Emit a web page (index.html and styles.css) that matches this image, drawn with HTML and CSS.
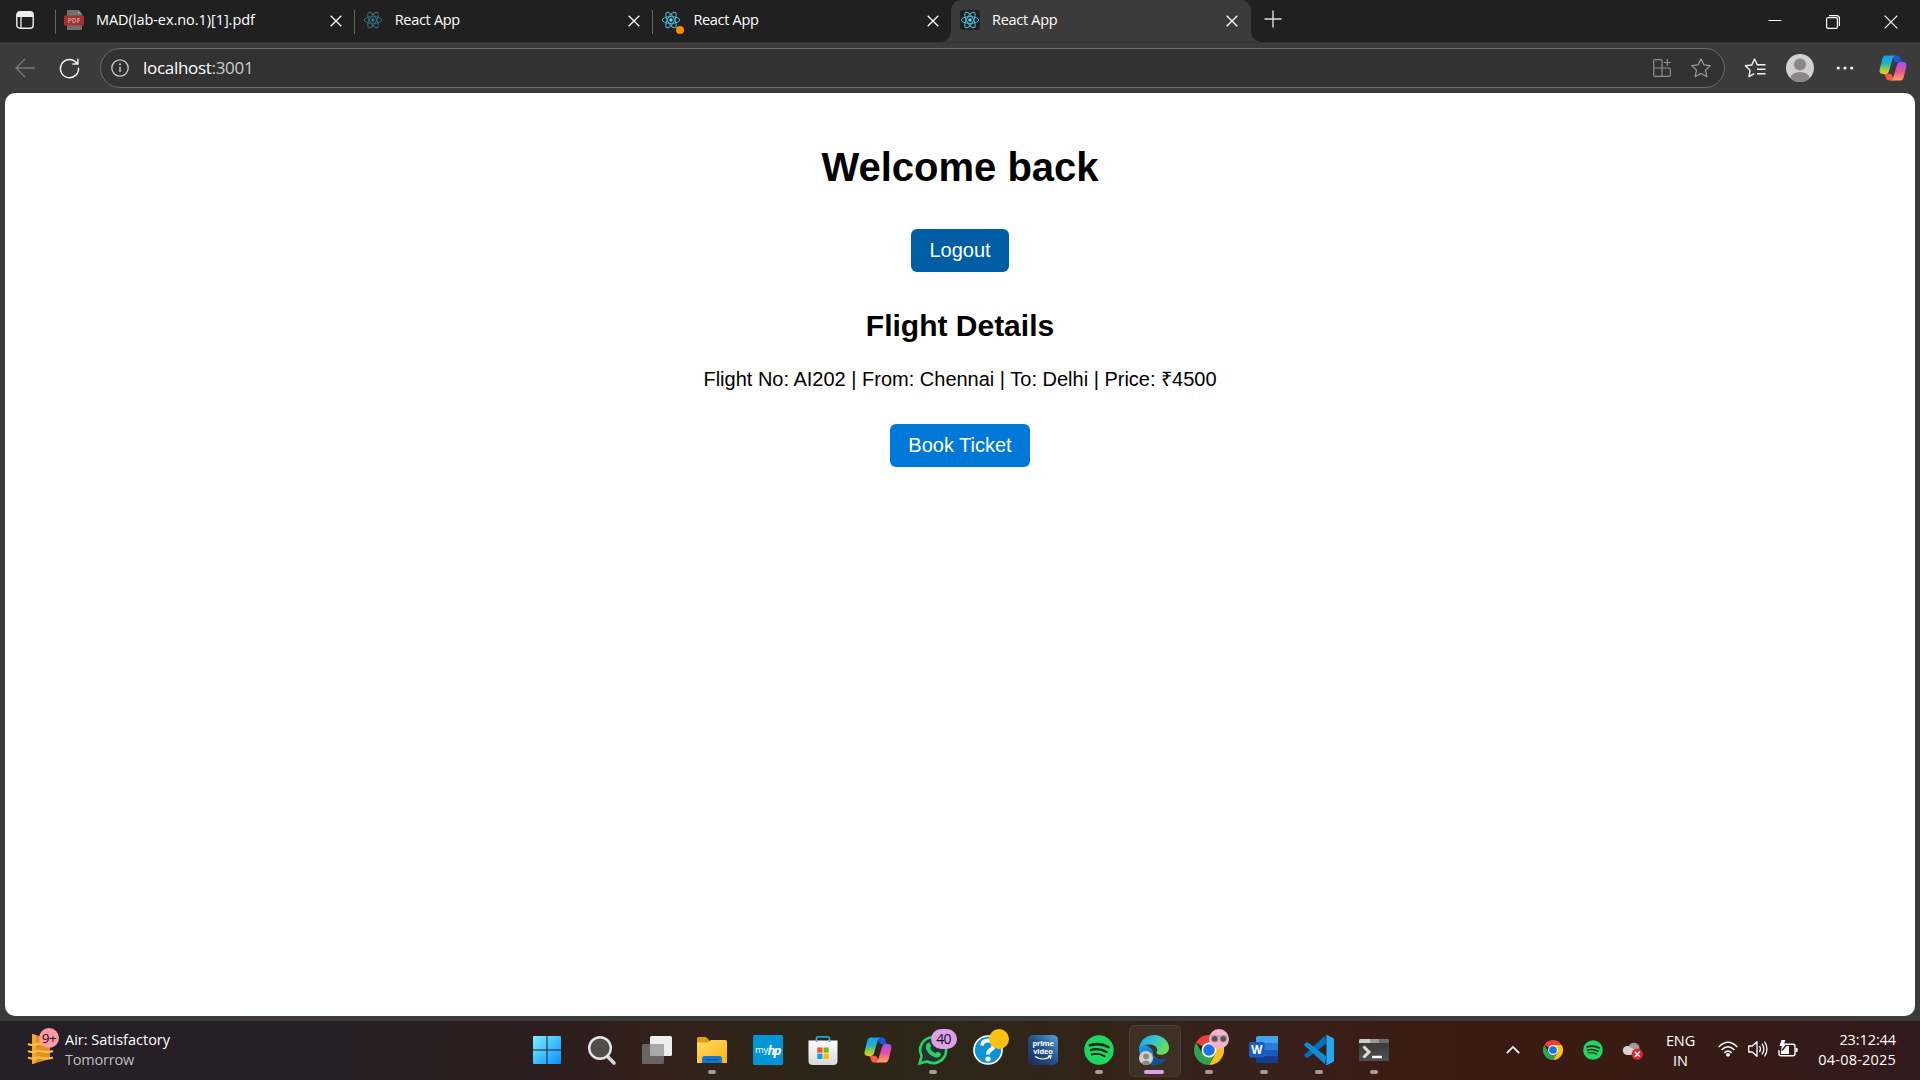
FILE: index.html
```html
<!DOCTYPE html>
<html lang="en">
<head>
<meta charset="utf-8">
<title>React App</title>
<link rel="stylesheet" href="styles.css">
</head>
<body>
<svg class="defs" width="0" height="0" aria-hidden="true">
  <defs>
    <linearGradient id="cpA" x1="0" y1="0" x2="0" y2="1"><stop offset="0" stop-color="#1a9df0"/><stop offset=".45" stop-color="#22b3c4"/><stop offset=".75" stop-color="#9ccb3c"/><stop offset="1" stop-color="#f8c818"/></linearGradient>
    <linearGradient id="cpB" x1="0" y1="0" x2="0" y2="1"><stop offset="0" stop-color="#a252ee"/><stop offset=".5" stop-color="#ee4f9a"/><stop offset="1" stop-color="#fda85a"/></linearGradient>
    <linearGradient id="win" x1="0" y1="0" x2="1" y2="1"><stop offset="0" stop-color="#7cf0ff"/><stop offset="1" stop-color="#0a8fff"/></linearGradient>
    <linearGradient id="fold" x1="0" y1="0" x2="1" y2="1"><stop offset="0" stop-color="#ffdc6a"/><stop offset="1" stop-color="#fbb40f"/></linearGradient>
    <linearGradient id="store" x1="0" y1="0" x2="0" y2="1"><stop offset="0" stop-color="#ffffff"/><stop offset="1" stop-color="#d9d9dc"/></linearGradient>
    <linearGradient id="prime" x1="0" y1="1" x2="1" y2="0"><stop offset="0" stop-color="#1d2a58"/><stop offset=".5" stop-color="#234f8d"/><stop offset="1" stop-color="#50a5dc"/></linearGradient>
    <linearGradient id="edgeTop" x1="0" y1="0" x2="1" y2=".5"><stop offset="0" stop-color="#229fe0"/><stop offset=".5" stop-color="#35c3d5"/><stop offset="1" stop-color="#69e052"/></linearGradient>
    <linearGradient id="edgeBase" x1="0" y1="0" x2="1" y2="1"><stop offset="0" stop-color="#1f9cec"/><stop offset="1" stop-color="#0b5ea8"/></linearGradient>
    <linearGradient id="term" x1="0" y1="0" x2="0" y2="1"><stop offset="0" stop-color="#363636"/><stop offset="1" stop-color="#505050"/></linearGradient>
    <symbol id="react" viewBox="0 0 20 20">
      <g fill="none" stroke="#4cb9d6" stroke-width="1"><ellipse cx="10" cy="10" rx="8.7" ry="3.4"/><ellipse cx="10" cy="10" rx="8.7" ry="3.4" transform="rotate(60 10 10)"/><ellipse cx="10" cy="10" rx="8.7" ry="3.4" transform="rotate(120 10 10)"/></g>
      <circle cx="10" cy="10" r="1.7" fill="#61dafb"/>
    </symbol>
    <symbol id="copilot" viewBox="0 0 28 26">
      <path d="M14 .5h4c2.300 0 3 1.500 3.600 3.300.4 1.500 1 3.500 3 3.500H19c-3 0-5-2-5-6.800z" fill="#1a58d8"/>
      <path d="M14 25.500h-4c-2 0-2.700-1.500-3.200-3.200C6.300 20.500 5.500 18.700 4 18.700h6c3 0 4.500 2.500 4 6.800z" fill="#f65b3c"/>
      <path d="M6.500.5h9.800c-1.500.4-2.200 1.800-2.800 3.700l-3.700 12.300c-.5 1.500-1.500 2.500-3.200 2.500H3.800C1 19 0 17.100.7 14.300L3.200 4.200C3.800 2 4.700.5 6.500.5z" fill="url(#cpA)"/>
      <path d="M21.500 25.500h-9.800c1.500-.4 2.200-1.800 2.800-3.700l3.700-12.300C18.700 8 19.700 7 21.400 7h2.800c2.800 0 3.800 1.900 3.100 4.700l-2.500 10.100c-.6 2.200-1.500 3.700-3.300 3.700z" fill="url(#cpB)"/>
    </symbol>
    <symbol id="chrome" viewBox="0 0 30 30">
      <path d="M15 15 2 7.500A15 15 0 0 1 28 7.500H15z" fill="#ea4335"/>
      <path d="M15 7.500h13A15 15 0 0 1 15 30l6.500-11.200z" fill="#fbc116"/>
      <path d="M2 7.500A15 15 0 0 0 15 30l6.500-11.200L15 15l-6.500 3.800z" fill="#30a350"/>
      <circle cx="15" cy="15" r="7.400" fill="#fff"/><circle cx="15" cy="15" r="5.800" fill="#1a73e8"/>
    </symbol>
    <symbol id="spotify" viewBox="0 0 30 30">
      <circle cx="15" cy="15" r="14.700" fill="#1ed760"/>
      <g fill="none" stroke="#14261a" stroke-linecap="round"><path d="M6 10.300c6-1.700 13-1.200 18.500 1.800" stroke-width="2.700"/><path d="M6.800 15c5.300-1.500 11-.8 15.700 1.900" stroke-width="2.300"/><path d="M7.600 19.500c4.500-1.200 9-.7 13 1.700" stroke-width="1.900"/></g>
    </symbol>
    <symbol id="x" viewBox="0 0 14 14"><path d="M1.700 1.700 12.300 12.300M12.300 1.700 1.700 12.300" fill="none" stroke="#fff" stroke-width="1.300"/></symbol>
  </defs>
</svg>

<div class="screen">
  <header class="tabstrip">
    <div class="workspace">
      <svg width="18" height="18" viewBox="0 0 18 18"><rect x=".8" y=".8" width="16.400" height="16.400" rx="3" fill="none" stroke="#eee" stroke-width="1.400"/><path d="M1 3.500Q1 1 3.500 1h11Q17 1 17 3.500V6H1z" fill="#eee"/><path d="M5 6v11" stroke="#eee" stroke-width="1.300"/></svg>
    </div>
    <div class="tab">
      <svg class="favicon" viewBox="0 0 20 20"><path d="M3 0h11l4 4v16H3z" fill="#6f6f6f"/><path d="M14 0l4 4h-4z" fill="#999"/><rect x="0" y="5.500" width="20" height="10" rx="1" fill="#a3302f"/><text class="pdf-label" x="10" y="13.300" text-anchor="middle">PDF</text></svg>
      <span class="tab-title first-title">MAD(lab-ex.no.1)[1].pdf</span>
      <svg class="tab-close"><use href="#x"/></svg>
    </div>
    <div class="tab">
      <svg class="favicon dim"><use href="#react"/></svg>
      <span class="tab-title">React App</span>
      <svg class="tab-close"><use href="#x"/></svg>
    </div>
    <div class="tab">
      <span class="fav-wrap"><svg class="favicon"><use href="#react"/></svg><i class="dot"></i></span>
      <span class="tab-title">React App</span>
      <svg class="tab-close"><use href="#x"/></svg>
    </div>
    <div class="tab active">
      <svg class="favicon tile"><use href="#react"/></svg>
      <span class="tab-title">React App</span>
      <svg class="tab-close"><use href="#x"/></svg>
    </div>
    <svg class="newtab" viewBox="0 0 18 18"><path d="M9 .5v17M.5 9h17" stroke="#ddd" stroke-width="1.400"/></svg>
    <div class="win-controls">
      <svg viewBox="0 0 14 14"><path d="M.5 5.500h13" stroke="#fff" stroke-width="1"/></svg>
      <svg viewBox="0 0 14 14"><rect x=".6" y="2.600" width="10.800" height="10.800" rx="1.500" fill="none" stroke="#fff" stroke-width="1.200"/><path d="M3 .6h7.500Q13.400.6 13.400 3.500V11" fill="none" stroke="#fff" stroke-width="1.200"/></svg>
      <svg viewBox="0 0 14 14"><path d="M.7.7l12.600 12.600M13.300.7.7 13.300" stroke="#fff" stroke-width="1.200"/></svg>
    </div>
  </header>

  <div class="toolbar">
    <svg class="back" viewBox="0 0 20 20"><path d="M10 1 1 10l9 9M1 10h19" fill="none" stroke="#777" stroke-width="1.300"/></svg>
    <svg class="reload" viewBox="0 0 22 22"><path d="M20.400 10A9.500 9.500 0 1 1 17 3.800L19.300 6M19.800.8V6.300H14" fill="none" stroke="#f2f2f2" stroke-width="1.500"/></svg>
    <div class="address">
      <svg width="18" height="18" viewBox="0 0 18 18"><circle cx="9" cy="9" r="8.200" fill="none" stroke="#ccc" stroke-width="1.300"/><path d="M9 8v5" stroke="#ccc" stroke-width="1.500"/><circle cx="9" cy="5.300" r="1" fill="#ccc"/></svg>
      <span class="url">localhost<span class="port">:3001</span></span>
      <svg class="apps" width="18" height="18" viewBox="0 0 18 18"><path d="M9 9H.7V2Q.7.7 2 .7h5.700Q9 .7 9 2v15.300M.7 9v7Q.7 17.300 2 17.300h14q1.300 0 1.300-1.300v-5.700Q17.300 9 16 9H9M14.300 0v7M10.800 3.500h7" fill="none" stroke="#8e8e8e" stroke-width="1.200"/></svg>
      <svg width="22" height="22" viewBox="0 0 22 22"><path d="M11 1.800l2.800 6 6.500.8-4.800 4.500 1.300 6.600L11 16.500l-5.800 3.200 1.300-6.600L1.700 8.600l6.500-.8z" fill="none" stroke="#999" stroke-width="1.300" stroke-linejoin="round"/></svg>
    </div>
    <div class="tools">
      <svg width="22" height="22" viewBox="0 0 22 22"><path d="M13.500 8.300 10.500 2 7.800 8l-6.300.8L6 13.300 5 19.700l5.200-3M13 7.800h8.500M13 12.300h8.500M13 16.800h8.500" fill="none" stroke="#f2f2f2" stroke-width="1.400" stroke-linejoin="round"/></svg>
      <svg class="avatar" width="28" height="28" viewBox="0 0 28 28"><defs><clipPath id="av"><circle cx="14" cy="14" r="14"/></clipPath></defs><circle cx="14" cy="14" r="14" fill="#d2d0ce"/><g clip-path="url(#av)" fill="#8a8886"><circle cx="14" cy="10.500" r="6"/><ellipse cx="14" cy="25" rx="10" ry="7"/></g></svg>
      <svg class="more" width="18" height="6" viewBox="0 0 18 6"><g fill="#f2f2f2"><circle cx="2.300" cy="3" r="1.600"/><circle cx="9" cy="3" r="1.600"/><circle cx="15.700" cy="3" r="1.600"/></g></svg>
      <svg class="copilot-btn" width="28" height="26"><use href="#copilot"/></svg>
    </div>
  </div>

  <main class="page">
    <h1>Welcome back</h1>
    <button class="btn logout">Logout</button>
    <h2>Flight Details</h2>
    <p>Flight No: AI202 | From: Chennai | To: Delhi | Price: ₹4500</p>
    <button class="btn book">Book Ticket</button>
  </main>

  <footer class="taskbar">
    <div class="weather">
      <div class="weather-icon">
        <svg width="26" height="32" viewBox="0 0 26 32"><path d="M4 1l18 5v20L4 31z" fill="#e0901c"/><path d="M4 1l4 1v28l-4 1z" fill="#f5a82c"/><path d="M0 11c6 3 7-1 12 0s8 2 13 0M0 18c6 3 7-1 12 0s8 2 13 0M0 24.500c6 3 7-1 12 0s8 2 13 0" fill="none" stroke="#f7c24c" stroke-width="2.200"/></svg>
        <span class="weather-badge">9+</span>
      </div>
      <div class="weather-text"><span class="air">Air: Satisfactory</span><span class="tomorrow">Tomorrow</span></div>
    </div>

    <div class="apps-row">
      <div class="app"><svg viewBox="0 0 30 30"><path d="M2 1h12.500v13.500H1V2q0-1 1-1zM15.500 1H28q1 0 1 1v12.500H15.500zM1 15.500h13.500V29H2q-1 0-1-1zM15.500 15.500H29V28q0 1-1 1H15.500z" fill="url(#win)"/></svg></div>
      <div class="app"><svg viewBox="0 0 30 30"><path d="M20 21l7 7" stroke="#d6d8dc" stroke-width="3.600" stroke-linecap="round"/><circle cx="13" cy="13" r="10.800" fill="#544c4c" stroke="#e4e6e8" stroke-width="2.400"/></svg></div>
      <div class="app"><svg viewBox="0 0 30 30"><rect x="8" y="1" width="22" height="20" rx="1.500" fill="#eee"/><rect x="0" y="9" width="22" height="20" rx="1.500" fill="#686664"/><path d="M8 9h14v12H9.500Q8 21 8 19.500z" fill="#aaa9a8"/></svg></div>
      <div class="app running"><svg viewBox="0 0 30 30"><path d="M0 3.500Q0 2 1.500 2H9l4 4h11v7H0z" fill="#e0a008"/><path d="M0 7.500h11L14 5h14.500Q30 5 30 6.500V28H0z" fill="url(#fold)"/><path d="M5 28v-4.500Q5 21 7.500 21h15q2.500 0 2.500 2.500V28z" fill="#0f78d4"/><path d="M8.500 24.600h13" stroke="#0a4e96" stroke-width="1.200"/></svg></div>
      <div class="app"><svg viewBox="0 0 30 30"><rect width="30" height="30" rx="1.500" fill="#0096d6"/><text class="hp-my" x="2" y="18">my</text><text class="hp-hp" x="14.500" y="20">hp</text></svg></div>
      <div class="app"><svg viewBox="0 0 30 30"><path d="M8.500 8V3.500q0-1.700 1.700-1.700h9.600q1.700 0 1.700 1.700V8" fill="none" stroke="#1ba7e0" stroke-width="1.700"/><path d="M.5 5.500H29.500V26q0 4-4 4H4.500q-4 0-4-4z" fill="url(#store)"/><path d="M8.500 5.500v1.500M21.500 5.500v1.500" stroke="#1ba7e0" stroke-width="1.700"/><path d="M9.300 12.500h5.200v5.200H9.300z" fill="#f25022"/><path d="M15.500 12.500h5.200v5.200h-5.200z" fill="#7fba00"/><path d="M9.300 18.700h5.200v5.200H9.300z" fill="#00a4ef"/><path d="M15.500 18.700h5.200v5.200h-5.200z" fill="#ffb900"/></svg></div>
      <div class="app"><svg class="cop"><use href="#copilot"/></svg></div>
      <div class="app running"><svg viewBox="0 0 30 30"><path d="M1.500 28.500 3.600 21A13 13 0 1 1 9 26.500z" fill="#25332a" stroke="#25d366" stroke-width="2.600"/><path d="M9.500 8.200c1-1 2.200-.7 2.700.5l.9 2.200c.3.900-1.300 1.900-1 2.500 1.200 2.200 2.800 3.700 5.100 4.700.7.300 1.500-1.800 2.400-1.400l2.700 1.300c1 .5.400 2.700-.6 3.500-2 1.600-4.500 1-7-.3-3-1.600-5.200-3.900-6.500-7-.9-2.200-.5-4.500 1.300-6z" fill="#25d366"/></svg><span class="count">40</span></div>
      <div class="app"><svg viewBox="0 0 30 30"><circle cx="15" cy="15" r="14" fill="#0a94d4" stroke="#fff" stroke-width="1.700"/><path d="M9 10.500Q9.500 5.500 15 5.500t5.500 5q0 3-3 4.500Q15 16.500 15 19.500" fill="none" stroke="#fff" stroke-width="3.800"/><circle cx="15" cy="24" r="2.600" fill="#fff"/></svg><span class="alert"></span></div>
      <div class="app"><svg viewBox="0 0 30 30"><rect width="30" height="30" rx="5" fill="url(#prime)"/><text class="prime-text" x="15" y="11" text-anchor="middle">prime</text><text class="prime-text" x="15" y="19" text-anchor="middle">video</text><path d="M7 21.500q8 5 15.500 0M20 21.200l3-.4-.6 3" fill="none" stroke="#fff" stroke-width="1.200"/></svg></div>
      <div class="app running"><svg><use href="#spotify"/></svg></div>
      <div class="app current"><svg viewBox="0 0 30 30"><path d="M.3 12C-1 22 6 30 16 30c5 0 9-2.500 11.500-6.500-7 3-13 0-13.500-5.500 0-2-1-4-3-5.500C7 9 2 9 .3 12z" fill="url(#edgeBase)"/><path d="M11 15.500c-.5 7 8 11.500 16.500 8C25 27.500 21 30 16 30c-7-1-9.500-9-5-14.500z" fill="#114f91"/><path d="M.3 13C1.200 5.500 7 0 15 0s15 6 15 12.500c0 5-4 7.300-8 7.300-3.500 0-5.300-1.300-4.200-2.800 1.700-3-.8-7.200-6.300-7.500C6.500 9 2.500 10 .3 13z" fill="url(#edgeTop)"/></svg>
        <svg class="profile" viewBox="0 0 14 14"><circle cx="7" cy="7" r="7" fill="#d2d0ce"/><circle cx="7" cy="5.300" r="2.900" fill="#8a8886"/><path d="M2.300 12q4.700-5 9.400 0-4.700 4-9.400 0z" fill="#8a8886"/></svg></div>
      <div class="app running"><svg><use href="#chrome"/></svg><svg class="glasses" viewBox="0 0 20 20"><circle cx="10" cy="10" r="10" fill="#f3b3cb"/><path d="M1.500 7h17" stroke="#b5a3ad" stroke-width="1.500"/><rect x="2.500" y="6.800" width="6.500" height="6.200" rx="3" fill="#575055" stroke="#a8989f" stroke-width=".8"/><rect x="11" y="6.800" width="6.500" height="6.200" rx="3" fill="#575055" stroke="#a8989f" stroke-width=".8"/></svg></div>
      <div class="app running"><svg viewBox="0 0 30 30"><path d="M7 2.500Q7 1 8.500 1H29v7H7z" fill="#41a5ee"/><path d="M7 8h22v7H7z" fill="#2b7cd3"/><path d="M7 15h22v6.500H7z" fill="#185abd"/><path d="M7 21.500h22V28H8.500Q7 28 7 26.500z" fill="#103f91"/><rect x="0" y="7" width="15.500" height="15.500" rx="1.500" fill="#1c5cc0"/><text class="word-w" x="7.700" y="19" text-anchor="middle">W</text></svg></div>
      <div class="app running"><svg viewBox="0 0 30 30"><path d="M22.500 8.500 4 22.500l-1.500.2L.5 21q-.7-.8 0-1.500L21 .8z" fill="#0072b8"/><path d="M22.500 21.500 4 7.500l-1.500-.2L.5 9q-.7.8 0 1.500L21 29.200z" fill="#108bd8"/><path d="M21.500.2Q22.500-.2 23.500.3L29 3q1 .5 1 1.500v21q0 1-1 1.500l-5.500 2.700q-1 .5-2 .1.900-.2 1-1.500V1.700Q22.500.4 21.500.2z" fill="#27a7f2"/></svg></div>
      <div class="app running"><svg viewBox="0 0 30 30"><rect x="0" y="4" width="30" height="22" rx="1.500" fill="url(#term)"/><path d="M1.500 4H11v4H0V5.500Q0 4 1.500 4z" fill="#ccc"/><path d="M11 4h9v4h-9z" fill="#999"/><path d="M20 4h8.500Q30 4 30 5.500V8H20z" fill="#6b6b6b"/><path d="M4.500 11.500l5.500 5.500-5.500 5.500" fill="none" stroke="#ddd" stroke-width="3"/><path d="M13 22h10" stroke="#fff" stroke-width="2.500"/></svg></div>
    </div>

    <div class="tray">
      <svg class="chev" viewBox="0 0 14 8"><path d="M.8 7.200 7 1l6.200 6.200" fill="none" stroke="#fff" stroke-width="1.700"/></svg>
      <svg class="small"><use href="#chrome"/></svg>
      <svg class="small"><use href="#spotify"/></svg>
      <svg class="small" viewBox="0 0 20 20"><path d="M5 14.500a4.500 4.500 0 0 1-1-8.500h2a5.500 5.500 0 0 1 10.500 2.500v6z" fill="#a19a98"/><path d="M4.500 15A4.500 4.500 0 1 1 7 7l8 5v3z" fill="#d6d2d1"/><circle cx="14.300" cy="14.300" r="5.700" fill="#d9232e"/><path d="M11.800 11.800l5 5M16.800 11.800l-5 5" stroke="#fff" stroke-width="1.500"/></svg>
      <div class="lang"><span>ENG</span><span>IN</span></div>
      <div class="status">
        <svg width="20" height="16" viewBox="0 0 20 16"><path d="M.7 6Q10-3.500 19.300 6M3.600 9Q10 2.500 16.400 9M6.400 12Q10 8.200 13.600 12" fill="none" stroke="#fff" stroke-width="1.500"/><circle cx="10" cy="13.800" r="1.900" fill="#fff"/></svg>
        <svg width="20" height="18" viewBox="0 0 20 18"><path d="M.7 6h3.600L9 1.700v14.600L4.300 12H.7z" fill="none" stroke="#fff" stroke-width="1.300" stroke-linejoin="round"/><path d="M11.500 6q2 3 0 6M14 3.700q3.700 5.300 0 10.600M16.500 1.500q5 7.500 0 15" fill="none" stroke="#fff" stroke-width="1.300"/></svg>
        <svg width="20" height="18" viewBox="0 0 20 18"><path d="M8 4.200h7q2 0 2 2v7.600q0 2-2 2H3q-2 0-2-2V10" fill="none" stroke="#fff" stroke-width="1.400"/><path d="M3 10.500h2L8.500 6H11v8H3zM3.500 0h4L6 3.500h2.700L3 10.500 3.800 6H1.500zM17.500 8h1.200q1 0 1 1v2q0 1-1 1h-1.200z" fill="#fff"/></svg>
      </div>
      <div class="clock"><span class="time">23:12:44</span><span class="date">04-08-2025</span></div>
    </div>
  </footer>
</div>
</body>
</html>
```
FILE: styles.css
```css
* { box-sizing: border-box; }
body { margin: 0; background: #3b3b3b; font-family: "Open Sans", "Noto Sans", sans-serif; }
svg { display: block; flex: none; overflow: visible; }
.defs { position: absolute; }
.screen { width: 1920px; height: 1080px; display: flex; flex-direction: column; overflow: hidden; background: #3b3b3b; }

/* Tab strip */
.tabstrip { height: 42px; flex: none; display: flex; align-items: flex-start; background: #202020; color: #fff; }
.workspace { width: 55px; padding: 11px 0 0 16px; }
.tab { width: 298.700px; height: 42px; padding: 10px 11px 0 9px; display: flex; align-items: flex-start; background: linear-gradient(#666, #666) 0 10px / 1px 24px no-repeat; }
.favicon { width: 20px; height: 20px; }
.dim { opacity: .5; }
.fav-wrap { position: relative; }
.dot { position: absolute; left: 15px; top: 16px; width: 8px; height: 8px; border-radius: 50%; background: #ff8c00; }
.tile { background: #202124; border-radius: 3px; }
.tab-title { flex: 1; margin-left: 12px; font-size: 14.500px; line-height: 20px; letter-spacing: -.3px; white-space: nowrap; }
.first-title { letter-spacing: -.05px; }
.tab-close { width: 14px; height: 14px; margin-top: 4px; }
.tab.active { position: relative; width: 300px; padding: 10px 12px 0 9px; background: #3b3b3b; border-radius: 10px 10px 0 0; }
.tab.active::before, .tab.active::after { content: ""; position: absolute; bottom: 0; width: 10px; height: 10px; }
.tab.active::before { left: -10px; background: radial-gradient(circle at 0 0, #202020 9.500px, #3b3b3b 10px); }
.tab.active::after { right: -10px; background: radial-gradient(circle at 100% 0, #202020 9.500px, #3b3b3b 10px); }
.newtab { width: 18px; height: 18px; margin: 10px 0 0 13px; }
.win-controls { margin: 15px 22px 0 auto; display: flex; gap: 44px; }
.win-controls svg { width: 14px; height: 14px; }

/* Toolbar */
.toolbar { height: 51px; flex: none; display: flex; align-items: center; padding: 0 13px 0 15px; border-top: 1px solid #333; }
.back { width: 20px; height: 20px; }
.reload { width: 21px; height: 21px; margin: 0 20px 0 24px; }
.address { width: 1625px; height: 40px; display: flex; align-items: center; padding: 0 12px 0 10px; border: 1px solid #6c6c6c; border-radius: 20px; background: #323232; }
.url { flex: 1; margin-left: 14px; font-size: 17px; line-height: 24px; letter-spacing: -.3px; color: #fff; }
.port { color: #ccc; }
.apps { margin-right: 19px; }
.tools { flex: 1; display: flex; align-items: center; padding-left: 19px; }
.avatar { margin-left: 20px; }
.more { margin-left: 22px; }
.copilot-btn { margin-left: auto; }

/* Page */
.page { height: 923px; flex: none; margin: 0 5px; padding: 51px 0 0; display: flex; flex-direction: column; align-items: center; border-radius: 10px; background: #fff; color: #000; font-family: "Liberation Sans", Arial, sans-serif; }
.page h1 { margin: 0; font-size: 40px; line-height: 46px; }
.page h2 { margin: 37px 0 0; font-size: 30px; line-height: 34px; }
.page p { margin: 25px 0 0; font-size: 20px; line-height: 23px; }
.btn { height: 43px; padding: 0; border: 0; border-radius: 6px; color: #fff; font: 20px/23px "Liberation Sans", Arial, sans-serif; }
.logout { width: 98px; margin-top: 39px; background: #005ea6; }
.book { width: 140px; margin-top: 33px; background: #0078d7; }

/* Taskbar */
.taskbar { height: 59px; flex: none; margin-top: 5px; display: flex; background: linear-gradient(90deg, #251f27 0, #271f25 300px, #2c1e1e 540px, #33211a 650px, #2d2618 800px, #2e2618 960px, #332319 1120px, #38201a 1280px, #3a1c15 1380px, #391b13 1600px, #321a1b 1920px); color: #fff; }
.weather { width: 519.500px; padding: 7px 0 0 28px; display: flex; }
.weather-icon { position: relative; padding-top: 5px; }
.weather-badge { position: absolute; left: 11px; top: 0; width: 20px; height: 20px; border-radius: 50%; background: #ff99a4; color: #111; font-size: 13.500px; line-height: 20px; text-align: center; letter-spacing: -.5px; }
.weather-text { margin: 2px 0 0 11px; display: flex; flex-direction: column; font-size: 14.500px; line-height: 20px; letter-spacing: -.2px; }
.air { letter-spacing: 0; }
.tomorrow { color: #c3bdc3; }
.apps-row { display: flex; }
.app { position: relative; width: 55.170px; height: 59px; padding: 14px 0 0 12.500px; }
.app > svg { width: 30px; height: 30px; }
.app > .cop { width: 28px; height: 26px; margin: 2px 0 0 1px; }
.running::after, .current::after { content: ""; position: absolute; left: 23.500px; top: 49px; width: 8px; height: 4px; border-radius: 2px; background: #a39c98; }
.current::after { left: 17.500px; width: 20px; background: #dc9fe8; }
.current::before { content: ""; position: absolute; left: 2.500px; top: 4px; width: 50px; height: 50px; border: 1px solid #4a3e33; border-radius: 5px; background: #3d3126; }
.current > svg { position: relative; }
.count { position: absolute; left: 25px; top: 8px; width: 26px; height: 20px; border-radius: 10px; background: #dc9fe8; color: #111; font-size: 14px; line-height: 20px; text-align: center; letter-spacing: -.7px; }
.alert { position: absolute; left: 28px; top: 8px; width: 20px; height: 20px; border-radius: 50%; background: #ffc10e; }
.app > .profile { position: absolute; left: 13px; top: 30px; width: 14px; height: 14px; }
.app > .glasses { position: absolute; left: 28px; top: 8px; width: 20px; height: 20px; }
.pdf-label { font: bold 6.500px "Open Sans", sans-serif; fill: #c99; }
.hp-my { font: 9.500px "Open Sans", sans-serif; fill: #fff; letter-spacing: -.3px; }
.hp-hp { font: italic bold 13px "Open Sans", sans-serif; fill: #fff; letter-spacing: -1.500px; }
.prime-text { font: bold 7.500px "Open Sans", sans-serif; fill: #fff; letter-spacing: -.2px; }
.word-w { font: bold 11.500px "Open Sans", sans-serif; fill: #fff; }

.tray { flex: 1; display: flex; align-items: flex-start; padding: 0 24px 0 103.500px; }
.chev { width: 14px; height: 8px; margin: 25px 23px 0 0; }
.small { width: 20px; height: 20px; margin: 19px 20px 0 0; }
.lang { width: 36px; margin: 10px 19px 0 0; display: flex; flex-direction: column; align-items: center; font-size: 14.500px; line-height: 20px; letter-spacing: -.1px; }
.status { display: flex; align-items: center; gap: 10px; height: 20px; margin-top: 18px; }
.clock { margin: 9px 0 0 auto; display: flex; flex-direction: column; align-items: flex-end; font-size: 14.500px; line-height: 20px; }
.time { letter-spacing: -.1px; }
.date { letter-spacing: .2px; }
```
